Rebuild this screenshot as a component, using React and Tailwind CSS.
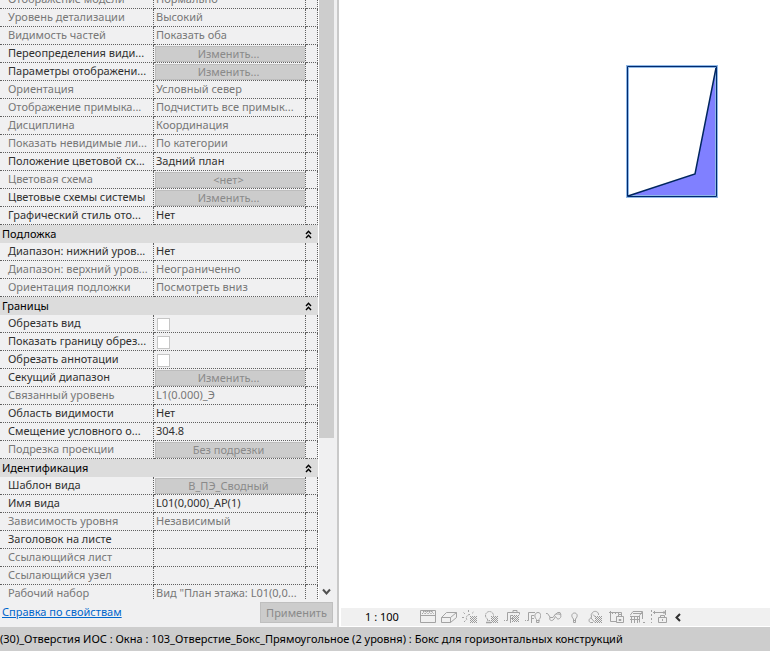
import React from "react";

const rows = [
  { label: "Отображение модели", value: "Нормально", dim: true },
  { label: "Уровень детализации", value: "Высокий", dim: true },
  { label: "Видимость частей", value: "Показать оба", dim: true },
  { label: "Переопределения види...", button: "Изменить..." },
  { label: "Параметры отображени...", button: "Изменить..." },
  { label: "Ориентация", value: "Условный север", dim: true },
  { label: "Отображение примыка...", value: "Подчистить все примык...", dim: true },
  { label: "Дисциплина", value: "Координация", dim: true },
  { label: "Показать невидимые ли...", value: "По категории", dim: true },
  { label: "Положение цветовой сх...", value: "Задний план" },
  { label: "Цветовая схема", button: "<нет>", dim: true },
  { label: "Цветовые схемы системы", button: "Изменить..." },
  { label: "Графический стиль ото...", value: "Нет" },
  { group: "Подложка" },
  { label: "Диапазон: нижний уров...", value: "Нет" },
  { label: "Диапазон: верхний уров...", value: "Неограниченно", dim: true },
  { label: "Ориентация подложки", value: "Посмотреть вниз", dim: true },
  { group: "Границы" },
  { label: "Обрезать вид", check: "crop-view" },
  { label: "Показать границу обрез...", check: "crop-border" },
  { label: "Обрезать аннотации", check: "crop-notes" },
  { label: "Секущий диапазон", button: "Изменить..." },
  { label: "Связанный уровень", value: "L1(0.000)_Э", dim: true },
  { label: "Область видимости", value: "Нет" },
  { label: "Смещение условного о...", value: "304.8" },
  { label: "Подрезка проекции", button: "Без подрезки", dim: true },
  { group: "Идентификация" },
  { label: "Шаблон вида", button: "В_ПЭ_Сводный" },
  { label: "Имя вида", value: "L01(0,000)_АР(1)" },
  { label: "Зависимость уровня", value: "Независимый", dim: true },
  { label: "Заголовок на листе", value: "" },
  { label: "Ссылающийся лист", value: "", dim: true },
  { label: "Ссылающийся узел", value: "", dim: true },
  { label: "Рабочий набор", value: 'Вид "План этажа: L01(0,0...', dim: true },
];

function GroupRow({ title }) {
  return (
    <tr className="h-[18px] bg-[#dcdcdc] text-black">
      <th colSpan={3} scope="colgroup" className="p-0 text-left font-normal">
        <button type="button" className="flex h-[18px] w-full items-center justify-between pl-[2px] pr-[6px]">
          <span>{title}</span>
          <svg width="7" height="9" viewBox="0 0 7 9" fill="none" stroke="#000" strokeWidth="1.4" aria-hidden="true">
            <path d="M1 4 3.5 1.2 6 4M1 8 3.5 5.2 6 8" />
          </svg>
        </button>
      </th>
    </tr>
  );
}

function PropertyRow({ row }) {
  const line = "h-[18px] border-b border-r border-dotted border-[#606060] p-0 align-top";
  return (
    <tr className={row.dim ? "text-[#777777]" : "text-[#303030]"}>
      <th scope="row" className={line + " overflow-hidden pl-2 text-left font-normal"}>
        {row.check ? <label htmlFor={row.check} className="block">{row.label}</label> : row.label}
      </th>
      <td className={line + " overflow-hidden pl-[2px]"}>
        {row.button && (
          <button
            type="button"
            disabled
            className="mt-[1px] -ml-[1px] block h-4 w-[151px] border border-[#bdbdbd] bg-[#cccccc] pr-1 text-center leading-[14px] text-[#8a8a8a]"
          >
            {row.button}
          </button>
        )}
        {row.check && (
          <input
            id={row.check}
            type="checkbox"
            className="mt-[3px] ml-[1px] block size-[13px] appearance-none border border-[#c6c6c6] bg-white"
          />
        )}
        {row.value}
      </td>
      <td className={line} />
    </tr>
  );
}

function Icon({ name, children }) {
  return (
    <button type="button" aria-label={name} className="flex size-4 shrink-0 items-center justify-center">
      <svg width="16" height="16" viewBox="0 0 16 16" fill="none" stroke="#a3a3a3" strokeWidth="1" aria-hidden="true">
        {children}
      </svg>
    </button>
  );
}

// Diagonal cross built from a checkerboard of single dots.
function Hatch({ x, y, size = 7 }) {
  const dots = [];
  const edge = size - 1;
  for (let r = 0; r < size; r++) {
    for (let c = 0; c < size; c++) {
      const notch = Math.abs(r - edge / 2) + Math.abs(c - edge / 2) > edge - 1 && r !== c && r + c !== edge;
      if ((r + c) % 2 === 0 && !notch) dots.push(`M${x + c} ${y + r}h1v1h-1z`);
    }
  }
  return <path d={dots.join("")} fill="#9a9a9a" stroke="none" shapeRendering="crispEdges" />;
}

function ViewIcons() {
  return (
    <>
      <Icon name="Масштаб">
        <path d="M.5 1.500h15v12h-15zM1 6.500h14" />
        <path d="M2 5l1.500-1.500L5 5l1.500-1.500L8 5l1.500-1.500L11 5l1.500-1.500L14 5M3 2.500h10" strokeDasharray="1.500 .5" />
      </Icon>
      <Icon name="Визуальный стиль">
        <path d="M.5 8.500h9v5h-9zM.5 8.500l5-5h10l-6 5M15.500 3.500v5l-6 5" />
      </Icon>
      <Icon name="Солнце">
        <path d="M8 5.500a3.500 3.500 0 0 0-3 5.500M6.500 1v2M1.500 3.500 3 5M0 8.500h2.500M2 13l1.500-1.500M11.500 3 10 4.500" strokeDasharray="2 .6" />
        <Hatch x={8} y={7} />
      </Icon>
      <Icon name="Тени">
        <path d="M4.500 10a4 4 0 1 1 6-3.500M4.500 10v1.500H7" strokeDasharray="2 .5" />
        <path d="M3 13.500h5" strokeWidth="1.500" />
        <Hatch x={8} y={7} />
      </Icon>
      <Icon name="Обрезка вида">
        <path d="M0 11.500h1M2 11.500h1.500v-8H15.500v2M6.500 14V6.500H9M7 9.500h2M9 3V1.500h4V3" />
        <Hatch x={8} y={6} />
      </Icon>
      <Icon name="Граница обрезки">
        <path d="M0 11.500h1M2 11.500h1.500v-8H10M6.500 14V6.500H9M7 9.500h2" />
        <path d="M11.500 10.500c-3-3-1.500-7 1.500-7s4 4 1 7v3h-2.500zM11.500 11.500h3" />
      </Icon>
      <Icon name="Временное скрытие">
        <path d="M0 4.500h1.500L4 8M4 8c-1 3 1 4.500 3 3s1.500-2.500 2.500-3.500l1.500 2c1 1 2.500.5 3.500-1s0-3.500-1.500-3.500H9.500L7 8.500H4M9.500 5.500l2-2H14l1 2.500" />
      </Icon>
      <Icon name="Скрытые элементы">
        <path d="M6.500 10c-3-3-1.500-6 1-6s4 3 1 6v3.500h-2zM6 11.500h3" />
      </Icon>
      <Icon name="Временные свойства">
        <path d="M5 13.500H2.500C.5 13 .5 9.500 3 9l.5-1a4 4 0 0 1 1-4.500C7 1 11 3 10.500 6M3 9l4 4.500M5 5.500l3 3" />
        <Hatch x={7} y={7} />
      </Icon>
      <Icon name="Аналитическая модель">
        <path d="M0 3.500h12.500V6M1.500 2v10.500H7M3.500 3.500v1.500M6.500 3.500v1.500M9.500 3.500v1.500" />
        <path d="M7.500 7.500h7v6h-7zM9.500 7.500V5.500h3v2M10 10.500h2v1h-2z" />
      </Icon>
      <Icon name="Наборы смещений">
        <path d="M0 7.500h9.500M0 10.500h9.500M1.500 7v7M4.500 7v7M7.500 7v7M0 6.500l3-4h9.500l-3 4v7M3 4.500h9M12.500 3v7M13 13.500h2" />
      </Icon>
      <Icon name="Ограничения">
        <path d="M.5 1v13" strokeDasharray="2 2" />
        <path d="M2 3.500h12M14.500 1v5M4 2 2.500 3.500 4 5M12.500 2 14 3.500 12.500 5M7.500 8.500h8v5h-8zM9.500 8.500V6.500h4v2M11.500 10v2" />
      </Icon>
    </>
  );
}

export default function App() {
  return (
    <div className="flex h-screen flex-col bg-white font-['Noto_Sans','Open_Sans',sans-serif] text-[11px] leading-4">
      <div className="flex min-h-0 flex-1">
        <aside className="flex w-[339px] shrink-0 flex-col border-r-2 border-[#c9c9c9] bg-[#f0f0f1]">
          <div className="flex min-h-0 flex-1 overflow-hidden">
            <div className="w-[319px] overflow-hidden border-r border-white">
              <table className="-mt-[9px] w-full table-fixed border-separate border-spacing-0 whitespace-nowrap">
                <colgroup>
                  <col className="w-[154px]" />
                  <col className="w-[152px]" />
                  <col />
                </colgroup>
                <tbody>
                  {rows.map((row, i) =>
                    row.group ? <GroupRow key={i} title={row.group} /> : <PropertyRow key={i} row={row} />
                  )}
                </tbody>
              </table>
            </div>
            <div className="flex w-[15px] flex-col justify-between">
              <div className="h-[73%] bg-[#cdcdcd]" />
              <svg className="mb-1 self-center" width="9" height="8" viewBox="0 0 9 8" fill="none" stroke="#505050" strokeWidth="2" aria-hidden="true">
                <path d="M1 1.500 4.500 5.500 8 1.500" />
              </svg>
            </div>
          </div>
          <div className="flex h-[27px] items-start justify-between pl-[2px] pr-1 pt-[2px]">
            <a href="#help" className="pt-[2px] text-[#0066cc] underline">Справка по свойствам</a>
            <button type="button" disabled className="h-[21px] w-[73px] border border-[#bfbfbf] bg-[#cccccc] text-[#8a8a8a]">
              Применить
            </button>
          </div>
        </aside>
        <main className="flex min-w-0 flex-1 flex-col">
          <div className="relative min-h-0 flex-1">
            <svg className="absolute left-[287px] top-[65px]" width="92" height="133" viewBox="0 0 92 133" role="img" aria-label="Отверстие">
              <path d="M2 131 69 109 90 3V131z" fill="#8080ff" />
              <path d="M1.500 1.500H90.500V131.500H1.500z" fill="none" stroke="#8fb8e6" strokeWidth="3" />
              <path d="M2 131 69 109 90 3" fill="none" stroke="#00265f" strokeWidth="1.500" />
              <path d="M1.500 1.500H90.500V131.500H1.500z" fill="none" stroke="#002a6e" strokeWidth="1" />
            </svg>
          </div>
          <div className="mb-[1px] ml-[2px] flex h-[18px] items-center gap-[5px] bg-[#f0f0f0] pl-6 text-black">
            <button type="button" className="w-[50px] text-left">1 : 100</button>
            <ViewIcons />
            <button type="button" className="flex w-3 items-center justify-center" aria-label="Свернуть">
              <svg width="6" height="9" viewBox="0 0 6 9" fill="none" stroke="#303030" strokeWidth="2" aria-hidden="true">
                <path d="M5 1 1.500 4.500 5 8" />
              </svg>
            </button>
          </div>
        </main>
      </div>
      <footer className="flex h-6 items-center whitespace-nowrap bg-[#cdcdcd] text-black">
        (30)_Отверстия ИОС : Окна : 103_Отверстие_Бокс_Прямоугольное (2 уровня) : Бокс для горизонтальных конструкций
      </footer>
    </div>
  );
}
